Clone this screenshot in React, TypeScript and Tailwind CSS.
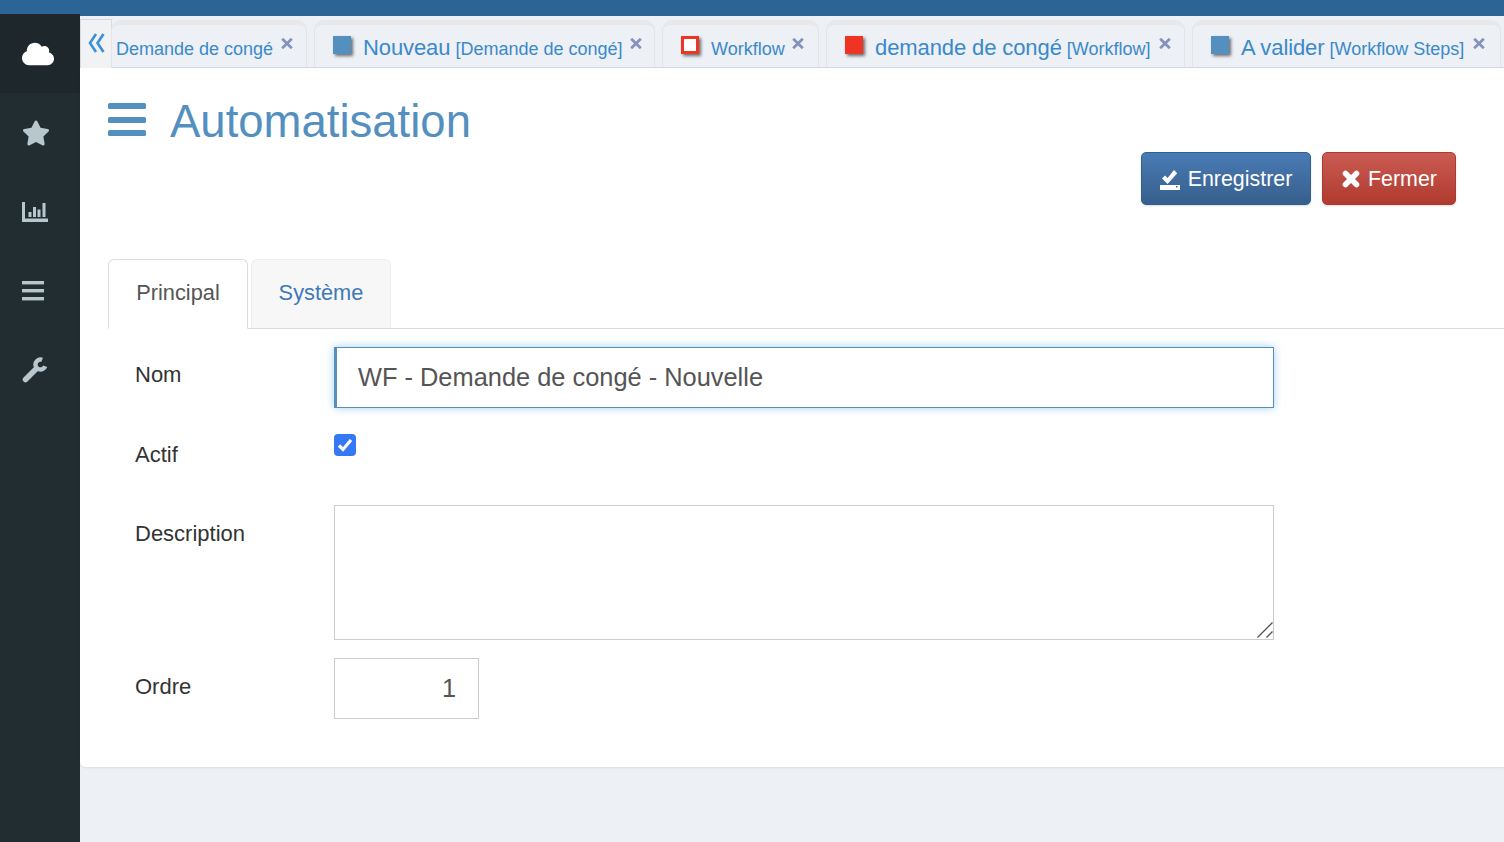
import React from "react";
import { FaCloud, FaStar } from "react-icons/fa";

const ChartIcon = () => (
  <svg width="26" height="20" viewBox="0 0 26 20" fill="#b8c7ce">
    <path d="M0 0h3v16.5h23V20H0z" />
    <rect x="6.5" y="10" width="3" height="5" />
    <rect x="11" y="5" width="3" height="10" />
    <rect x="15.5" y="7.5" width="3" height="7.5" />
    <rect x="20.5" y="1" width="3" height="14" />
  </svg>
);

const WrenchIcon = () => (
  <svg width="26" height="26" viewBox="0 0 26 26" fill="none" stroke="#b8c7ce">
    <path d="M3.5 22.5L13.5 12.5" strokeWidth="5.5" strokeLinecap="round" />
    <path d="M20.2 2.8A5 5 0 1 0 23.2 9.2" strokeWidth="4.4" />
  </svg>
);

const SaveIcon = () => (
  <svg width="20" height="20" viewBox="0 0 20 20" fill="white" className="shrink-0">
    <path d="M2 8.5l3-3 2.6 2.6L14 0l3.2 3.2L7.6 14z" />
    <path d="M0 15h20v5H0z" />
    <rect x="16" y="16" width="1.5" height="1.5" fill="#3c6797" />
  </svg>
);

const BoldX = () => (
  <svg width="18" height="18" viewBox="0 0 18 18" fill="none" stroke="white" strokeWidth="5.6" strokeLinecap="round" className="shrink-0 -mt-[2px]">
    <path d="M3.5 3.5L14.5 14.5M14.5 3.5L3.5 14.5" />
  </svg>
);

const CloseX = ({ ml }: { ml: string }) => (
  <svg width="12" height="11" viewBox="0 0 12 11" fill="none" stroke="#8492bd" strokeWidth="2.8" className={`${ml} mt-[13px] shrink-0`}>
    <path d="M1.2 .8L10.8 10.2M10.8 .8L1.2 10.2" />
  </svg>
);

function Sq({ kind }: { kind: "blue" | "outline" | "red" }) {
  const cls =
    kind === "blue"
      ? "bg-[#5390bf]"
      : kind === "red"
        ? "bg-[#ef3424]"
        : "bg-white border-[3px] border-[#ef3424]";
  return <span className={`block w-[18px] h-[18px] shrink-0 shadow-[2px_2px_3px_rgba(0,0,0,0.55)] ${cls}`} />;
}

function DocTab({
  w,
  sq,
  main,
  sub,
  mainSmall,
  first,
  closeMl = "ml-[7px]",
}: {
  w: string;
  sq?: "blue" | "outline" | "red";
  main: string;
  sub?: string;
  mainSmall?: boolean;
  first?: boolean;
  closeMl?: string;
}) {
  return (
    <div className={`${w} h-[47px] shrink-0 rounded-t-[10px] border-t-[5px] border-x border-t-[#e8e8ea] border-x-[#e2e4e8] bg-[#edf0f5] flex items-start relative ${first ? "pl-[4px]" : "pl-[18px]"}`}>
      {sq && (
        <span className="mt-[11px] mr-[12px]">
          <Sq kind={sq} />
        </span>
      )}
      <span className={`text-[#3a8acb] whitespace-nowrap leading-[26px] flex items-baseline gap-[5px] ${mainSmall ? "mt-[11px]" : "mt-[10px]"}`}>
        <span className={mainSmall ? "text-[18px]" : "text-[22px] tracking-[-0.1px]"}>{main}</span>
        {sub && <span className="text-[18px]">{sub}</span>}
      </span>
      <CloseX ml={closeMl} />
    </div>
  );
}

function Row({ label, className, labelPt, children }: { label: string; className: string; labelPt: string; children: React.ReactNode }) {
  return (
    <div className={`flex items-start ${className}`}>
      <label className={`w-[226px] pl-[27px] text-[22px] leading-[28px] text-[#333] shrink-0 ${labelPt}`}>{label}</label>
      {children}
    </div>
  );
}

export default function App() {
  return (
    <div className="w-[1504px] h-[842px] overflow-hidden bg-[#edf0f5] flex flex-col font-['Liberation_Sans',Arial,sans-serif]">
      <div className="h-[14px] bg-[#2c6495] shrink-0" />
      <div className="flex flex-1 min-h-0">
        <aside className="w-[80px] shrink-0 bg-[#222d32] flex flex-col">
          <div className="h-[79px] bg-[#1e282c] flex items-center pl-[22px]">
            <FaCloud size={32} className="text-white" />
          </div>
          <div className="flex flex-col">
            <div className="h-[79px] flex items-center pl-[22px]">
              <FaStar size={28} className="text-[#b8c7ce]" />
            </div>
            <div className="h-[79px] flex items-center pl-[22px]">
              <ChartIcon />
            </div>
            <div className="h-[79px] flex items-center pl-[22px]">
              <svg width="22" height="20" viewBox="0 0 22 20" fill="#b8c7ce">
                <rect width="22" height="3.4" />
                <rect y="8" width="22" height="3.4" />
                <rect y="16" width="22" height="3.4" />
              </svg>
            </div>
            <div className="h-[79px] flex items-center pl-[22px]">
              <WrenchIcon />
            </div>
          </div>
        </aside>
        <main className="flex-1 min-w-0 flex flex-col">
          <div className="h-[2px] bg-[#2c6495] shrink-0" />
          <div className="h-[52px] shrink-0 flex items-end border-b border-[#d5d7dc] relative">
            <div className="w-[32px] h-[49px] shrink-0 bg-[#f1f2f4] border-x border-t border-[#d8dade] flex justify-center pt-[13px] -mb-px">
              <svg width="17" height="20" viewBox="0 0 17 20" fill="none" stroke="#3d8fd8" strokeWidth="2.6">
                <path d="M8 1L2 10L8 19M15.5 1L9.5 10L15.5 19" />
              </svg>
            </div>
            <div className="flex gap-[7px] items-end -ml-px">
              <DocTab w="w-[196px]" main="Demande de congé" mainSmall first closeMl="ml-[8px]" />
              <DocTab w="w-[341px]" sq="blue" main="Nouveau" sub="[Demande de congé]" />
              <DocTab w="w-[157px]" sq="outline" main="Workflow" mainSmall />
              <DocTab w="w-[359px]" sq="red" main="demande de congé" sub="[Workflow]" closeMl="ml-[9px]" />
              <DocTab w="w-[309px]" sq="blue" main="A valider" sub="[Workflow Steps]" closeMl="ml-[9px]" />
            </div>
          </div>
          <section className="h-[699px] shrink-0 bg-white rounded-bl-[6px] shadow-[0_1px_2px_rgba(0,0,0,0.08)] pl-[28px]">
            <div className="h-[191px] relative">
              <div className="flex items-center pt-[30px] gap-[23px]">
                <svg width="39" height="34" viewBox="0 0 39 34" fill="#5390bf" className="-mt-[4px]">
                  <rect width="38" height="6" rx="1.5" />
                  <rect y="14" width="38" height="6" rx="1.5" />
                  <rect y="27" width="38" height="6" rx="1.5" />
                </svg>
                <h1 className="text-[45.5px] leading-[48px] text-[#5390bf]">Automatisation</h1>
              </div>
              <div className="absolute top-[84px] right-[48px] flex gap-[11px]">
                <button className="w-[170px] h-[53px] pt-[2px] rounded-[5px] border border-[#2e6090] bg-gradient-to-b from-[#4a7bb5] to-[#365f8c] text-white text-[21.4px] flex items-center justify-center gap-[8px] shadow-[0_1px_2px_rgba(0,0,0,0.15)]">
                  <SaveIcon />
                  Enregistrer
                </button>
                <button className="w-[134px] h-[53px] pt-[2px] pl-[1px] rounded-[5px] border border-[#ac3a31] bg-gradient-to-b from-[#ca5b53] to-[#b03a2e] text-white text-[21.4px] flex items-center justify-center gap-[8px] shadow-[0_1px_2px_rgba(0,0,0,0.15)]">
                  <BoldX />
                  Fermer
                </button>
              </div>
            </div>
            <div className="flex gap-[3px] h-[70px] border-b border-[#dcdcdc] items-end">
              <div className="w-[140px] h-[70px] -mb-px pb-[2px] bg-white border border-[#dcdcdc] border-b-white rounded-t-[6px] flex items-center justify-center text-[21.8px] text-[#555]">
                Principal
              </div>
              <div className="w-[140px] h-[69px] pb-[1px] bg-[#f7f7f7] border border-[#eeeeee] border-b-0 rounded-t-[6px] flex items-center justify-center text-[21.8px] text-[#4079b8]">
                Système
              </div>
            </div>
            <Row label="Nom" className="mt-[18px]" labelPt="pt-[14px]">
              <input
                readOnly
                value="WF - Demande de congé - Nouvelle"
                className="w-[940px] h-[61px] bg-white border border-[#5390bf] border-l-[3px] pl-[21px] text-[25.4px] text-[#555] outline-none shadow-[0_0_8px_rgba(102,175,233,0.6)]"
              />
            </Row>
            <Row label="Actif" className="mt-[26px]" labelPt="pt-[7px]">
              <span className="w-[22px] h-[22px] rounded-[4px] bg-[#3478f6] flex items-center justify-center">
                <svg width="16" height="14" viewBox="0 0 16 14" fill="none" stroke="white" strokeWidth="3.2">
                  <path d="M2 7.5l4 4 8-9.5" />
                </svg>
              </span>
            </Row>
            <Row label="Description" className="mt-[36px] h-[135px]" labelPt="pt-[15px]">
              <div className="relative w-[940px] h-[135px]">
                <textarea
                  readOnly
                  className="block w-full h-full resize-none bg-white border border-[#cccccc] outline-none"
                />
                <svg width="16" height="16" viewBox="0 0 16 16" fill="none" stroke="#555" strokeWidth="1.4" className="absolute right-[1px] bottom-[2px]">
                  <path d="M0.5 15.5L15.5 0.5M9.5 15.5L15.5 9.5" />
                </svg>
              </div>
            </Row>
            <Row label="Ordre" className="mt-[18px]" labelPt="pt-[15px]">
              <input
                readOnly
                value="1"
                className="w-[145px] h-[61px] bg-white border border-[#cccccc] text-right pr-[22px] text-[25.4px] text-[#555] outline-none"
              />
            </Row>
          </section>
        </main>
      </div>
    </div>
  );
}
